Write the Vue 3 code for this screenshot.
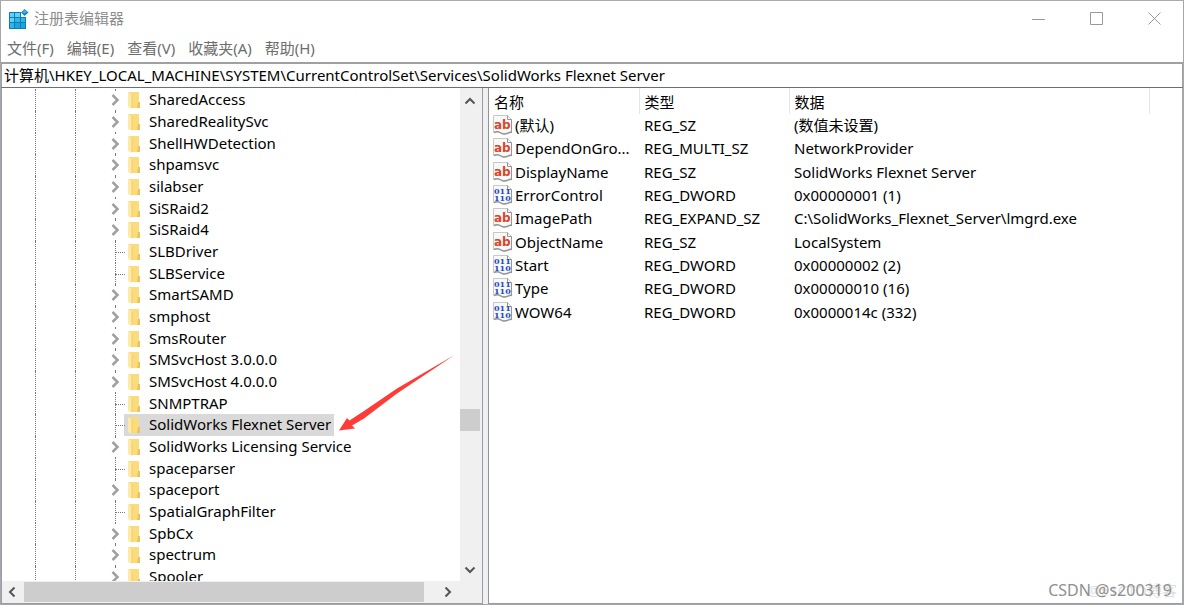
<script setup>
import { ref } from 'vue'

const path = ref('计算机\\HKEY_LOCAL_MACHINE\\SYSTEM\\CurrentControlSet\\Services\\SolidWorks Flexnet Server')
const menus = ['文件(F)', '编辑(E)', '查看(V)', '收藏夹(A)', '帮助(H)']
const selected = ref('SolidWorks Flexnet Server')

const keys = [
  ['SharedAccess', true],
  ['SharedRealitySvc', true],
  ['ShellHWDetection', true],
  ['shpamsvc', true],
  ['silabser', true],
  ['SiSRaid2', true],
  ['SiSRaid4', true],
  ['SLBDriver', false],
  ['SLBService', false],
  ['SmartSAMD', true],
  ['smphost', true],
  ['SmsRouter', true],
  ['SMSvcHost 3.0.0.0', true],
  ['SMSvcHost 4.0.0.0', true],
  ['SNMPTRAP', false],
  ['SolidWorks Flexnet Server', false],
  ['SolidWorks Licensing Service', true],
  ['spaceparser', false],
  ['spaceport', true],
  ['SpatialGraphFilter', false],
  ['SpbCx', true],
  ['spectrum', true],
  ['Spooler', true],
].map(([name, branch]) => ({ name, branch }))

const values = [
  ['(默认)', 'REG_SZ', '(数值未设置)'],
  ['DependOnGro...', 'REG_MULTI_SZ', 'NetworkProvider'],
  ['DisplayName', 'REG_SZ', 'SolidWorks Flexnet Server'],
  ['ErrorControl', 'REG_DWORD', '0x00000001 (1)'],
  ['ImagePath', 'REG_EXPAND_SZ', 'C:\\SolidWorks_Flexnet_Server\\lmgrd.exe'],
  ['ObjectName', 'REG_SZ', 'LocalSystem'],
  ['Start', 'REG_DWORD', '0x00000002 (2)'],
  ['Type', 'REG_DWORD', '0x00000010 (16)'],
  ['WOW64', 'REG_DWORD', '0x0000014c (332)'],
].map(([name, type, data]) => ({ name, type, data }))
</script>

<template>
  <div class="window">
    <header class="titlebar">
      <svg class="app-icon" width="20" height="20" viewBox="0 0 20 20" aria-hidden="true">
        <path d="M0 3h12v5h5v12H0z" fill="#0b7fb5" />
        <path d="M1 4h4v4H1zM6 4h5v4H6zM1 9h4v4H1z" fill="#5fd3f3" />
        <path d="M6 9h5v4H6zM1 14h4v5H1zM12 9h4v4h-4z" fill="#2fb6e6" />
        <path d="M6 14h5v5H6zM12 14h4v5h-4z" fill="#1ba3da" />
        <path d="M15.500 0l4 3.500-4 3.500-3.500-3.500z" fill="#1386bd" />
        <path d="M15.500 1l2.500 2-2.500 1.500-2.500-1.500z" fill="#3fb4de" />
      </svg>
      <h1>注册表编辑器</h1>
      <div class="window-buttons">
        <button type="button" aria-label="最小化">
          <svg width="14" height="14" viewBox="0 0 14 14"><path d="M0 7.500h13" /></svg>
        </button>
        <button type="button" aria-label="最大化">
          <svg width="14" height="14" viewBox="0 0 14 14"><path d="M.5.5h12v12H.5z" /></svg>
        </button>
        <button type="button" aria-label="关闭">
          <svg width="14" height="14" viewBox="0 0 14 14"><path d="M.5.5l12 12M12.500.5l-12 12" /></svg>
        </button>
      </div>
    </header>

    <nav class="menu">
      <button v-for="m in menus" :key="m" type="button">{{ m }}</button>
    </nav>

    <input v-model="path" class="address" type="text" aria-label="地址" spellcheck="false" />

    <main class="panes">
      <section class="tree-pane">
        <ul class="tree">
          <li v-for="k in keys" :key="k.name" :class="{ leaf: !k.branch, selected: k.name === selected }">
            <span class="guide"></span>
            <span class="guide"></span>
            <span class="joint">
              <svg v-if="k.branch" width="10" height="18" viewBox="0 -3 10 18" aria-hidden="true">
                <path d="M1.500 1l5 5-5 5" fill="none" stroke="#a0a0a0" stroke-width="2.500" />
              </svg>
            </span>
            <button type="button" class="key" @click="selected = k.name">
              <svg width="12" height="17" viewBox="0 0 12 17" aria-hidden="true">
                <path d="M1 0h10v10.500l1 .5v5H2z" fill="#fbdc7c" />
                <path d="M10 10h2v6h-3z" fill="#edc358" />
                <path d="M0 0l4 2.500V17l-4-2z" fill="#ffe9a6" />
                <path d="M4 2.500V16" stroke="#eecb6b" fill="none" />
              </svg>
              <span>{{ k.name }}</span>
            </button>
          </li>
        </ul>
        <div class="scroll-y">
          <button type="button" class="up" aria-label="向上滚动">
            <svg width="12" height="10" viewBox="0 0 12 10"><path d="M1.500 7.500L6 3l4.500 4.500" /></svg>
          </button>
          <div class="track-y"><span class="before"></span><span class="thumb"></span><span class="after"></span></div>
          <button type="button" aria-label="向下滚动">
            <svg width="12" height="10" viewBox="0 0 12 10"><path d="M1.500 2.500L6 7l4.500-4.500" /></svg>
          </button>
        </div>
        <div class="scroll-x">
          <button type="button" aria-label="向左滚动">
            <svg width="10" height="12" viewBox="0 0 10 12"><path d="M7.500 1.500L3 6l4.500 4.500" /></svg>
          </button>
          <span class="thumb"></span>
          <button type="button" aria-label="向右滚动">
            <svg width="10" height="12" viewBox="0 0 10 12"><path d="M2.500 1.500L7 6l-4.500 4.500" /></svg>
          </button>
          <span class="corner"></span>
        </div>
        <svg class="arrow" width="116" height="77" viewBox="0 0 116 77" aria-hidden="true">
          <path d="M0 75.500L8 63l2.500 2.500L25 56 58 33.500 115.500 0 58 38.500 25 63.500 13 70.500l3 3z" fill="#ff3b38" />
        </svg>
      </section>

      <section class="value-pane">
        <table>
          <colgroup><col class="c1" /><col class="c1" /><col class="c3" /><col /></colgroup>
          <thead>
            <tr><th>名称</th><th>类型</th><th>数据</th><td></td></tr>
          </thead>
          <tbody>
            <tr v-for="v in values" :key="v.name">
              <td>
                <div class="name">
                  <svg width="20" height="20" viewBox="0 0 20 20" aria-hidden="true">
                    <path d="M.5.5h14l4 4v13c-2-1-3 0-5 1s-4 1-6-.5-4-2-7-.5z" fill="#f8f8f8" stroke="#c8c8c8" />
                    <path d="M14.500.5v4h4v13" fill="none" stroke="#969696" />
                    <path d="M1 17.500c3-1.500 5-1 7 .5s4 1 6 .5 3-2 5-1" fill="none" stroke="#969696" stroke-width="1.500" />
                    <g v-if="v.type === 'REG_DWORD'" class="bits">
                      <text x="1" y="9">011</text>
                      <text x="1" y="16">110</text>
                    </g>
                    <text v-else class="letters" x="1" y="14">ab</text>
                  </svg>
                  <span>{{ v.name }}</span>
                </div>
              </td>
              <td>{{ v.type }}</td>
              <td>{{ v.data }}</td>
              <td></td>
            </tr>
          </tbody>
        </table>
      </section>
    </main>

    <div class="watermark back">@51CTO博客</div>
    <div class="watermark">CSDN @s200319</div>
  </div>
</template>

<style>
html, body, #app { height: 100%; }
body { margin: 0; overflow: hidden; }
</style>

<style scoped>
.window {
  position: relative;
  box-sizing: border-box;
  display: flex;
  flex-direction: column;
  height: 100vh;
  padding-bottom: 1px;
  border-top: 1px solid #acacac;
  background: #fff;
  color: #000;
  font: 15px/22px "Noto Sans", "Noto Sans CJK SC", sans-serif;
}
.window::after {
  content: "";
  position: absolute;
  inset: 0;
  border: 1px solid #a6a7ab;
  border-top: 0;
  pointer-events: none;
}
button {
  margin: 0;
  padding: 0;
  border: 0;
  background: none;
  color: inherit;
  font: inherit;
}
svg { flex: none; display: block; }

.titlebar { display: flex; align-items: center; height: 36px; padding-left: 9px; flex: none; }
.titlebar h1 { margin: 0 0 0 5px; padding-bottom: 2px; font-size: 15px; font-weight: 400; color: #8c8c8c; }
.window-buttons { display: flex; margin-left: auto; }
.window-buttons button { display: flex; align-items: center; justify-content: center; width: 58px; height: 36px; }
.window-buttons svg { fill: none; stroke: #999; }

.menu { box-sizing: border-box; display: flex; align-items: center; gap: 13px; flex: none; height: 25px; padding: 0 0 3px 7px; color: #6d6d6d; }

.address {
  box-sizing: border-box;
  flex: none;
  width: 100%;
  height: 26px;
  padding: 0 2px 2px;
  border: 1px solid #a0a0a0;
  border-width: 2px 2px 1px;
  border-bottom-color: #696f75;
  outline: 0;
  background: #fff;
  color: #000;
  font: inherit;
}

.panes { display: flex; flex: 1; min-height: 0; gap: 5px; background: #f0f0f0; }
.tree-pane {
  position: relative;
  box-sizing: border-box;
  display: grid;
  grid-template: minmax(0, 1fr) 22px / minmax(0, 1fr) 22px;
  width: 483px;
  flex: none;
  border: solid #9a9da3;
  border-width: 0 1px 1px 2px;
  background: #fff;
}
.tree { margin: 0; padding: 1px 0 0; overflow: hidden; list-style: none; }
.tree li { display: flex; height: 22px; padding-left: 33px; }
.tree li:nth-child(3n) { height: 21px; }
.guide { box-sizing: border-box; width: 40px; border-left: 1px dotted #777; }
.joint { position: relative; box-sizing: border-box; width: 9px; }
.joint svg { position: absolute; left: -4px; top: 2px; background: #fff; }
.joint::before { content: ""; position: absolute; left: 0; top: 0; bottom: 0; border-left: 1px dotted #777; }
.leaf .joint::after { content: ""; position: absolute; left: 0; top: 11px; width: 10px; border-top: 1px dotted #777; }
.key { display: flex; align-items: flex-start; gap: 9px; padding: 0 3px 0 4px; white-space: nowrap; }
.key svg { margin-top: 3px; }
.key span { line-height: 20px; }
.selected .key { background: #d9d9d9; }

.scroll-y, .scroll-x { display: flex; background: #f0f0f0; }
.scroll-y { flex-direction: column; }
.scroll-y button, .scroll-x button { display: flex; align-items: center; justify-content: center; width: 20px; height: 22px; flex: none; }
.scroll-y .up { height: 26px; }
.scroll-y svg, .scroll-x svg { fill: none; stroke: #555; stroke-width: 2; }
.thumb { background: #cdcdcd; }
.track-y { display: flex; flex-direction: column; flex: 1; }
.track-y .thumb { width: 20px; height: 22px; }
.before { flex: 295; }
.after { flex: 128; }
.scroll-x { grid-column: 1 / 3; }
.scroll-x .thumb { flex: 1; height: 20px; margin: 1px 14px 1px 2px; }
.corner { width: 24px; }
.arrow { position: absolute; left: 337px; top: 267px; }

.value-pane { flex: 1; min-width: 0; overflow: hidden; border-left: 1px solid #8f949a; border-right: 2px solid #a6a7ab; border-bottom: 1px solid #9a9da3; background: #fff; }
table { width: 100%; table-layout: fixed; border-collapse: collapse; }
.c1 { width: 150px; }
.c3 { width: 360px; }
th, td { padding: 0 0 0 5px; text-align: left; font-weight: 400; white-space: nowrap; }
td:first-child { padding-left: 4px; }
thead tr { height: 26px; }
th { border-right: 1px solid #e5e5e5; padding-top: 2px; }
tbody tr { height: 23px; }
tbody tr:nth-child(3n) { height: 24px; }
tbody td { padding-bottom: 1px; }
.name { display: flex; align-items: center; gap: 2px; height: 20px; }
.name svg { overflow: visible; }
.letters { fill: #d9472b; font: bold 12px "DejaVu Sans", sans-serif; }
.bits { fill: #2347cf; font: bold 8px "DejaVu Serif", serif; }

.watermark { position: absolute; right: 12px; bottom: 4px; color: #8f8f8f; font-size: 16px; }
.back { right: 7px; color: #dedede; font-size: 15px; }
</style>
